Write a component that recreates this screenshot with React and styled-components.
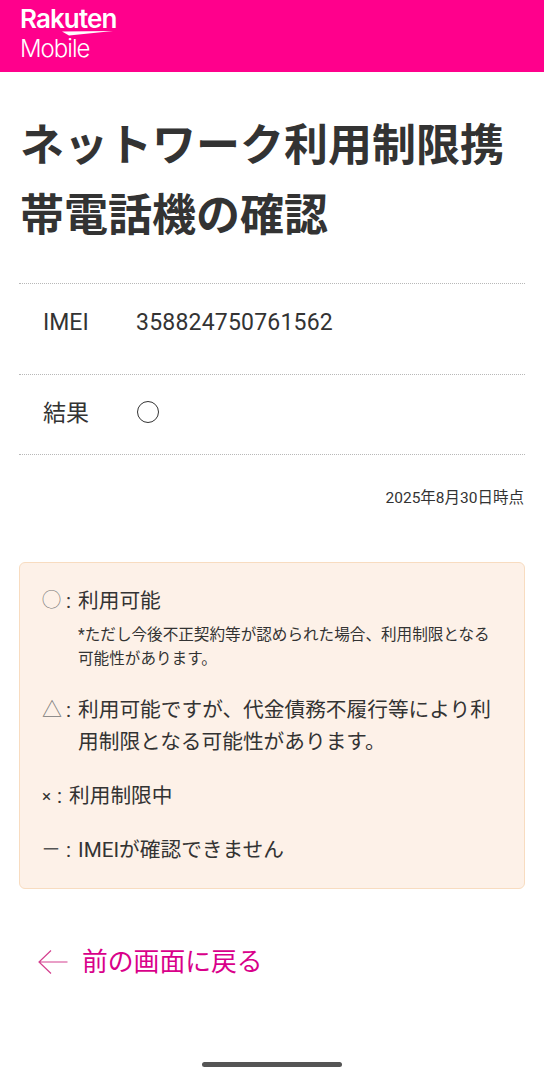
import React from 'react';
import styled, { createGlobalStyle } from 'styled-components';

const GlobalStyle = createGlobalStyle`
  html, body {
    margin: 0;
    padding: 0;
    background: #fff;
  }
  body {
    font-family: Roboto, "Noto Sans CJK JP", sans-serif;
    color: #333;
  }
`;

const Page = styled.div`
  width: 544px;
  height: 1080px;
  display: flex;
  flex-direction: column;
  overflow: hidden;
`;

const Header = styled.header`
  height: 72px;
  flex-shrink: 0;
  background: #ff008c;
  padding: 5px 0 0 20px;
  box-sizing: border-box;
  color: #fff;
`;
const Logo = styled.div`
  position: relative;
  width: 100px;
`;
const LogoTop = styled.div`
  font-family: Inter, sans-serif;
  font-size: 26px;
  font-weight: 600;
  letter-spacing: -0.9px;
  line-height: 28px;
`;
const LogoSwoosh = styled.svg`
  position: absolute;
  left: 20px;
  top: 25px;
`;
const LogoBottom = styled.div`
  font-family: Inter, sans-serif;
  font-size: 24px;
  font-weight: 300;
  letter-spacing: -1px;
  line-height: 28px;
  margin-top: 2px;
`;

const Title = styled.h1`
  margin: 39px 0 0;
  padding: 0 20px;
  font-size: 44px;
  font-weight: 700;
  line-height: 70px;
  color: #333;
`;

const Table = styled.div`
  margin: 32px 19px 0;
  border-top: 1px dotted #b8b8b8;
`;
const Row = styled.div`
  display: flex;
  align-items: center;
  height: ${props => props.$h}px;
  padding-left: 24px;
  border-bottom: 1px dotted #b8b8b8;
  font-size: 23px;
`;
const RowLabel = styled.div`
  width: 93px;
  flex-shrink: 0;
  margin-bottom: ${props => props.$up}px;
`;
const RowValue = styled.div`
  margin-bottom: ${props => props.$up}px;
  letter-spacing: 0.2px;
`;
const Circle = styled.span`
  display: block;
  width: 20px;
  height: 20px;
  margin: 0 0 5px 1px;
  border: 1px solid #333;
  border-radius: 50%;
`;

const DateNote = styled.div`
  margin: 33px 20px 0 0;
  text-align: right;
  font-size: 15.5px;
  line-height: 20px;
`;

const Legend = styled.div`
  margin: 54px 19px 0;
  height: 327px;
  box-sizing: border-box;
  padding: 22px 26px 0 22px;
  background: #fdf1e8;
  border: 1px solid #f8dcc0;
  border-radius: 6px;
  font-size: 20.7px;
  line-height: 32px;
`;
const LegendItem = styled.div`
  display: flex;
  margin-top: ${props => props.$mt || 0}px;
`;
const Mark = styled.span`
  flex-shrink: 0;
  width: ${props => props.$w || 24}px;
  font-size: ${props => props.$size || 20}px;
  color: ${props => props.$tone || '#333'};
`;
const Colon = styled.span`
  flex-shrink: 0;
  width: 12px;
`;
const Note = styled.div`
  margin-top: 6px;
  font-size: 15.6px;
  line-height: 24px;
`;

const BackLink = styled.a`
  display: flex;
  align-items: center;
  gap: 14px;
  margin: 55px 0 0 38px;
  color: #d9008a;
  font-size: 25.8px;
  line-height: 36px;
  text-decoration: none;
`;

const HomeBar = styled.div`
  width: 140px;
  height: 5px;
  margin: auto auto 13px;
  border-radius: 3px;
  background: #555;
  flex-shrink: 0;
`;

const App = () => {
  return (
    <Page>
      <GlobalStyle />
      <Header>
        <Logo>
          <LogoTop>Rakuten</LogoTop>
          <LogoSwoosh width="76" height="10" viewBox="0 0 76 10">
            <path d="M22 1.5 L73 1 L29 5.5 Z" fill="#fff" />
          </LogoSwoosh>
          <LogoBottom>Mobile</LogoBottom>
        </Logo>
      </Header>
      <Title>ネットワーク利用制限携帯電話機の確認</Title>
      <Table>
        <Row $h={90}>
          <RowLabel $up={14}>IMEI</RowLabel>
          <RowValue $up={14}>358824750761562</RowValue>
        </Row>
        <Row $h={79}>
          <RowLabel $up={8}>結果</RowLabel>
          <Circle />
        </Row>
      </Table>
      <DateNote>2025年8月30日時点</DateNote>
      <Legend>
        <LegendItem>
          <Mark $tone="#777" $size={19}>◯</Mark>
          <Colon>:</Colon>
          <div>
            利用可能
            <Note>*ただし今後不正契約等が認められた場合、利用制限となる可能性があります。</Note>
          </div>
        </LegendItem>
        <LegendItem $mt={23}>
          <Mark $tone="#777">△</Mark>
          <Colon>:</Colon>
          <div>利用可能ですが、代金債務不履行等により利用制限となる可能性があります。</div>
        </LegendItem>
        <LegendItem $mt={22}>
          <Mark $w={15} $size={17}>×</Mark>
          <Colon>:</Colon>
          <div>利用制限中</div>
        </LegendItem>
        <LegendItem $mt={22}>
          <Mark $tone="#555" $size={18}>ー</Mark>
          <Colon>:</Colon>
          <div>IMEIが確認できません</div>
        </LegendItem>
      </Legend>
      <BackLink href="#">
        <svg width="30" height="26" viewBox="0 0 30 26" fill="none" stroke="#d4408f" strokeWidth="1.2">
          <path d="M29.5 13H1M13 1.5L1 13l12 11.5" />
        </svg>
        前の画面に戻る
      </BackLink>
      <HomeBar />
    </Page>
  );
};

export default App;
